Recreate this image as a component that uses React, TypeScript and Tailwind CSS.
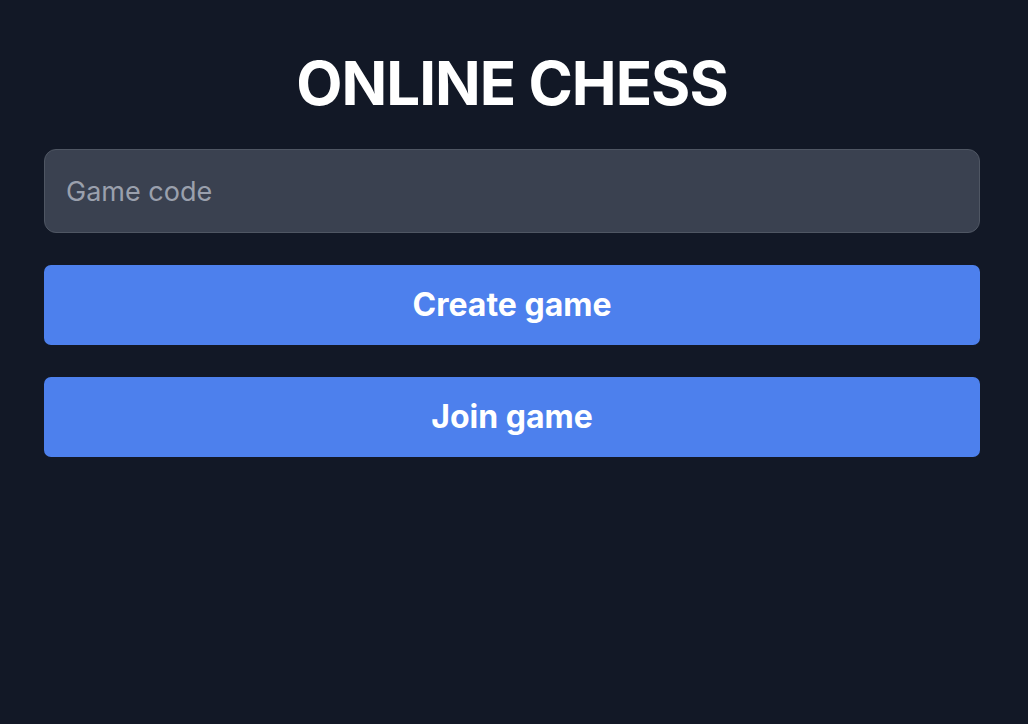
import React, { useState } from "react";

const App: React.FC = () => {
  const [code, setCode] = useState("");

  return (
    <div
      className="min-h-screen w-full bg-[#121826] pl-[44px] pr-[48px] pt-[53px]"
      style={{ fontFamily: "Inter, 'Noto Sans', sans-serif" }}
    >
      {/* TITLE */}
      <h1 className="text-center text-[60px] leading-[60px] font-bold tracking-[-1px] text-white">
        ONLINE CHESS
      </h1>

      <div className="mt-[36px] flex flex-col gap-[32px]">
        {/* CODE INPUT */}
        <input
          value={code}
          onChange={(e) => setCode(e.target.value)}
          placeholder="Game code"
          className="h-[84px] w-full rounded-[12px] border-[1.5px] border-[#4f5663] bg-[#3a4150] px-[21px] text-[27px] text-white placeholder:text-[#9aa0ad] outline-none"
        />

        {/* BUTTONS */}
        <button className="h-[80px] w-full rounded-[7px] bg-[#4d80ed] text-[32px] font-bold text-white">
          Create game
        </button>
        <button className="h-[80px] w-full rounded-[7px] bg-[#4d80ed] text-[32px] font-bold text-white">
          Join game
        </button>
      </div>
    </div>
  );
};

export default App;
